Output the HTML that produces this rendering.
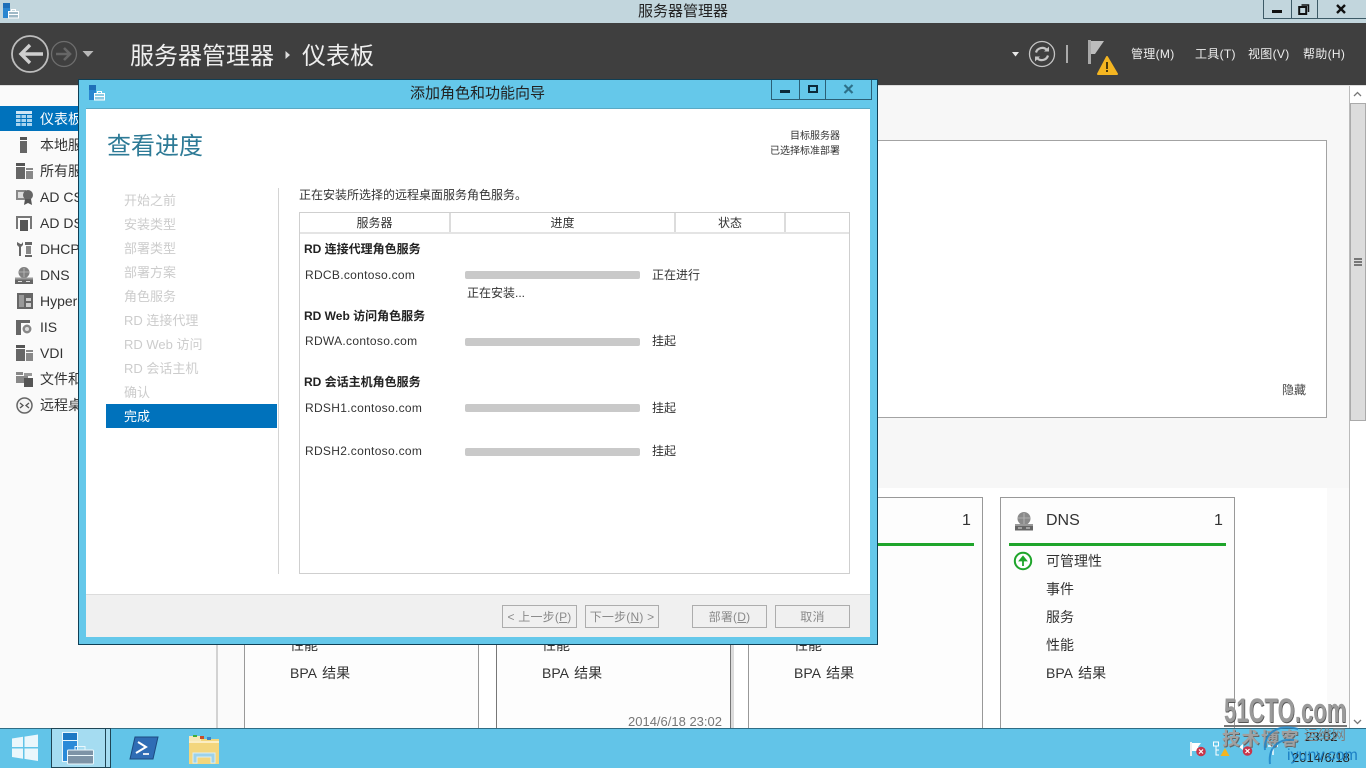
<!DOCTYPE html>
<html lang="zh"><head><meta charset="utf-8"><title>服务器管理器</title>
<style>
html,body{margin:0;padding:0;width:1366px;height:768px;overflow:hidden;background:#fafafa}
body{font-family:"Liberation Sans","Noto Sans CJK SC",sans-serif;color:#333;position:relative}
.a,.t{position:absolute}
.t{white-space:nowrap;line-height:20px}
.n{font-size:14px;color:#333;left:40px}
.s{font-size:13px;color:#ccc;left:124px}
.c{font-size:12px;color:#333}
.u{letter-spacing:.3px}
.b{font-size:12px;color:#222;font-weight:bold;left:304px}
.bar{position:absolute;left:465px;width:175px;height:8px;background:#c9c9c9;border-radius:2px}
.h{position:absolute;top:213px;height:19px;border-right:2px solid #dcdcdc;font-size:12px;text-align:center;line-height:21px;color:#333}
.btn{position:absolute;top:605px;height:21px;border:1px solid #adadad;font-size:12px;color:#8a8a8a;text-align:center;line-height:22px;box-sizing:content-box;background:#f0f0f0;letter-spacing:.2px}
.card{position:absolute;background:#fdfdfd;border:1px solid #999;box-sizing:border-box}
.m{font-size:14px;color:#333;word-spacing:2px}
.menu{font-size:12px;color:#eee;letter-spacing:.3px}
svg{position:absolute;display:block}
</style></head><body>

<!-- title bar -->
<div class="a" style="left:0;top:0;width:1366px;height:23px;background:#c2d6dd"></div>
<svg style="left:2px;top:3px" width="17" height="16" viewBox="0 0 17 16"><rect x="1" y="0" width="7" height="5" fill="#1e6fb8"/><rect x="1" y="5" width="7" height="10" fill="#2a86d0"/><rect x="6.500" y="8.500" width="10" height="6.500" fill="#9fb9c6" stroke="#fff"/><path d="M9.500 8.500V6.500h4v2M7 11.500h9" stroke="#fff" fill="none"/></svg>
<div class="t" style="left:638px;top:2px;font-size:15px;color:#222">服务器管理器</div>
<div class="a" style="left:1263px;top:0;width:104px;height:19px;border:1px solid #3d5a66;border-top:0;box-sizing:border-box"></div>
<div class="a" style="left:1291px;top:0;width:1px;height:19px;background:#3d5a66"></div>
<div class="a" style="left:1317px;top:0;width:1px;height:19px;background:#3d5a66"></div>
<div class="a" style="left:1272px;top:10px;width:10px;height:3px;background:#111"></div>
<svg style="left:1298px;top:4px" width="12" height="11" viewBox="0 0 12 11"><path d="M3.500 1h7v7" stroke="#111" stroke-width="1.500" fill="none"/><rect x="1.200" y="3" width="7" height="7" stroke="#111" stroke-width="2" fill="none"/></svg>
<svg style="left:1335px;top:4px" width="12" height="10" viewBox="0 0 12 10"><path d="M2 1l8 8M10 1l-8 8" stroke="#111" stroke-width="2.400"/></svg>

<!-- dark header -->
<div class="a" style="left:0;top:23px;width:1366px;height:62px;background:#3f3f3f"></div>
<svg style="left:10px;top:34px" width="40" height="40" viewBox="0 0 40 40"><circle cx="20" cy="20" r="18" stroke="#bdbdbd" stroke-width="1.800" fill="none"/><path d="M33 20H11M20 11L11 20l9 9" stroke="#cfcfcf" stroke-width="3.400" fill="none"/></svg>
<svg style="left:50px;top:40px" width="28" height="28" viewBox="0 0 28 28"><circle cx="14" cy="14" r="12.500" stroke="#6d6d6d" stroke-width="1.300" fill="none"/><path d="M6 14h14M14 8l6 6-6 6" stroke="#666" stroke-width="2.600" fill="none"/></svg>
<svg style="left:82px;top:50px" width="12" height="8"><path d="M0.500 1h11L6 7z" fill="#b8b8b8"/></svg>
<div class="t" style="left:130px;top:40px;font-size:24px;line-height:34px;color:#eee">服务器管理器</div>
<svg style="left:285px;top:50px" width="6" height="10"><path d="M0.500 1L5 5 .5 9z" fill="#ddd"/></svg>
<div class="t" style="left:302px;top:40px;font-size:24px;line-height:34px;color:#eee">仪表板</div>
<svg style="left:1012px;top:52px" width="7" height="5"><path d="M0 0h7L3.500 4.500z" fill="#e8e8e8"/></svg>
<svg style="left:1028px;top:40px" width="28" height="28" viewBox="0 0 28 28"><circle cx="14" cy="14" r="12.500" stroke="#c4c4c4" stroke-width="1.300" fill="none"/><path d="M8 12.500a6.500 6.500 0 0 1 11-2.500M20 15.500a6.500 6.500 0 0 1-11 2.500" stroke="#c4c4c4" stroke-width="2.200" fill="none"/><path d="M21 6.500v5h-5zM7 21.500v-5h5z" fill="#c4c4c4"/></svg>
<div class="a" style="left:1066px;top:45px;width:2px;height:18px;background:#aaa"></div>
<svg style="left:1087px;top:39px" width="32" height="37" viewBox="0 0 32 37"><rect x="1" y="1" width="3" height="24" fill="#a8a8a8"/><path d="M4 2h13L8 15H4z" fill="#bdbdbd"/><path d="M20 18L11 35h19z" fill="#f4b521" stroke="#f4b521" stroke-width="2" stroke-linejoin="round"/><rect x="19.100" y="23" width="1.800" height="7" fill="#3a2c08"/><rect x="19.100" y="31" width="1.800" height="2" fill="#3a2c08"/></svg>
<div class="t menu" style="left:1131px;top:44px">管理(M)</div>
<div class="t menu" style="left:1195px;top:44px">工具(T)</div>
<div class="t menu" style="left:1248px;top:44px">视图(V)</div>
<div class="t menu" style="left:1303px;top:44px">帮助(H)</div>

<!-- main content background -->
<div class="a" style="left:0;top:85px;width:1366px;height:1px;background:#ddd"></div>
<div class="a" style="left:218px;top:86px;width:1131px;height:402px;background:#f7f7f7"></div>
<div class="a" style="left:216px;top:86px;width:2px;height:642px;background:#d2d2d2"></div>

<!-- scrollbar -->
<div class="a" style="left:1349px;top:86px;width:17px;height:642px;background:#fff;border-left:1px solid #bbb;box-sizing:border-box"></div>
<svg style="left:1353px;top:91px" width="9" height="6"><path d="M1 5l3.500-3.500L8 5" stroke="#777" stroke-width="1.300" fill="none"/></svg>
<div class="a" style="left:1350px;top:103px;width:16px;height:318px;background:#dcdcdc;border:1px solid #aaa;box-sizing:border-box"></div>
<div class="a" style="left:1354px;top:258px;width:8px;height:2px;background:#777"></div>
<div class="a" style="left:1354px;top:261px;width:8px;height:2px;background:#777"></div>
<div class="a" style="left:1354px;top:264px;width:8px;height:2px;background:#777"></div>
<svg style="left:1353px;top:719px" width="9" height="6"><path d="M1 1l3.500 3.500L8 1" stroke="#777" stroke-width="1.300" fill="none"/></svg>

<!-- welcome panel -->
<div class="a" style="left:700px;top:140px;width:627px;height:278px;background:#fff;border:1px solid #a3a3a3;box-sizing:border-box"></div>
<div class="t" style="left:1282px;top:380px;font-size:12px;color:#444">隐藏</div>

<!-- cards area -->
<div class="a" style="left:244px;top:488px;width:1083px;height:240px;background:#fff"></div>
<div class="card" style="left:244px;top:497px;width:235px;height:240px"></div>
<div class="card" style="left:496px;top:497px;width:235px;height:240px;border-color:#777"></div>
<div class="a" style="left:731px;top:497px;width:3px;height:231px;background:#dcdcdc"></div>
<div class="card" style="left:748px;top:497px;width:235px;height:240px"></div>
<div class="card" style="left:1000px;top:497px;width:235px;height:240px"></div>
<div class="a" style="left:760px;top:543px;width:214px;height:3px;background:#1fa52b"></div>
<div class="t" style="left:962px;top:511px;font-size:16px;color:#333">1</div>
<svg style="left:1015px;top:512px" width="18" height="19" viewBox="0 0 18 19"><circle cx="9" cy="6.500" r="6.500" fill="#8a8a8a"/><path d="M3 6h12M9 1v11" stroke="#bbb" stroke-width=".8"/><rect x="0" y="12" width="18" height="2" fill="#999"/><rect x="0" y="14" width="18" height="4.500" fill="#666"/><path d="M3 16h4M11 16h4" stroke="#ddd"/></svg>
<div class="t" style="left:1046px;top:511px;font-size:16px;color:#333">DNS</div>
<div class="t" style="left:1214px;top:511px;font-size:16px;color:#333">1</div>
<div class="a" style="left:1009px;top:543px;width:217px;height:3px;background:#1fa52b"></div>
<svg style="left:1013px;top:551px" width="20" height="20" viewBox="0 0 20 20"><circle cx="10" cy="10" r="8.200" stroke="#1fa52b" stroke-width="2" fill="#fff"/><path d="M10 15V8M7 9.500L10 5.800 13 9.500z" stroke="#1fa52b" stroke-width="1.800" fill="#1fa52b"/></svg>
<div class="t m" style="left:1046px;top:551px">可管理性</div>
<div class="t m" style="left:1046px;top:579px">事件</div>
<div class="t m" style="left:1046px;top:607px">服务</div>
<div class="t m" style="left:1046px;top:635px">性能</div>
<div class="t m" style="left:1046px;top:663px">BPA 结果</div>
<div class="t m" style="left:290px;top:635px">性能</div>
<div class="t m" style="left:290px;top:663px">BPA 结果</div>
<div class="t m" style="left:542px;top:635px">性能</div>
<div class="t m" style="left:542px;top:663px">BPA 结果</div>
<div class="t m" style="left:794px;top:635px">性能</div>
<div class="t m" style="left:794px;top:663px">BPA 结果</div>
<div class="t" style="left:628px;top:712px;font-size:13px;color:#777">2014/6/18 23:02</div>

<!-- left nav -->
<div class="a" style="left:0;top:106px;width:80px;height:25px;background:#0072bc"></div>
<svg style="left:16px;top:111px" width="16" height="15" viewBox="0 0 16 15"><rect width="16" height="3" fill="#cfe6f5"/><path d="M0 4h4.500v3H0zM5.500 4H10v3H5.500zM11 4h5v3h-5zM0 8h4.500v3H0zM5.500 8H10v3H5.500zM11 8h5v3h-5zM0 12h4.500v3H0zM5.500 12H10v3H5.500zM11 12h5v3h-5z" fill="#a8d4ef"/></svg>
<div class="t n" style="top:109px;color:#fff">仪表板</div>
<svg style="left:20px;top:137px" width="8" height="16"><rect width="7" height="3" fill="#555"/><rect y="4" width="7" height="12" fill="#666"/></svg>
<div class="t n" style="top:135px">本地服</div>
<svg style="left:16px;top:163px" width="17" height="16"><rect width="9" height="3" fill="#555"/><rect y="4" width="9" height="12" fill="#666"/><rect x="10" y="5" width="7" height="2" fill="#888"/><rect x="10" y="8" width="7" height="8" fill="#888"/></svg>
<div class="t n" style="top:161px">所有服</div>
<svg style="left:16px;top:189px" width="17" height="16"><rect y="1" width="10" height="10" fill="#888"/><rect x="2" y="3" width="6" height="6" fill="#ddd"/><circle cx="12" cy="6" r="5" fill="#666"/><path d="M9 10l-1 6 4-2 4 2-1-6z" fill="#555"/></svg>
<div class="t n" style="top:187px">AD CS</div>
<svg style="left:16px;top:215px" width="17" height="16"><rect x="0" y="1" width="2" height="13" fill="#777"/><rect x="14" y="1" width="2" height="13" fill="#777"/><rect x="0" y="1" width="16" height="2" fill="#777"/><rect x="4" y="5" width="8" height="11" fill="#555"/></svg>
<div class="t n" style="top:213px">AD DS</div>
<svg style="left:16px;top:241px" width="17" height="16"><path d="M1 1v3l2 2v9h2V6l2-2V1L5.500 3h-1z" fill="#666"/><rect x="9" y="1" width="7" height="3" fill="#666"/><rect x="10" y="5" width="5" height="8" fill="#888"/><rect x="9" y="14" width="7" height="2" fill="#666"/></svg>
<div class="t n" style="top:239px">DHCP</div>
<svg style="left:15px;top:267px" width="18" height="17" viewBox="0 0 18 17"><circle cx="9" cy="5.500" r="5.500" fill="#808080"/><path d="M4 5h10M9 1v9" stroke="#bbb" stroke-width=".8"/><rect x="0" y="10.500" width="18" height="2" fill="#999"/><rect x="0" y="12.500" width="18" height="4.500" fill="#666"/><path d="M3 14.500h4M11 14.500h4" stroke="#ddd"/></svg>
<div class="t n" style="top:265px">DNS</div>
<svg style="left:17px;top:293px" width="16" height="16"><rect width="16" height="16" fill="#666"/><rect x="2" y="2" width="5" height="12" fill="#999"/><rect x="9" y="5" width="5" height="3" fill="#ccc"/><rect x="9" y="10" width="5" height="4" fill="#ccc"/></svg>
<div class="t n" style="top:291px">Hyper</div>
<svg style="left:16px;top:319px" width="17" height="16"><rect y="1" width="5" height="15" fill="#666"/><rect x="0" y="1" width="14" height="3" fill="#666"/><circle cx="11" cy="10" r="5" fill="#888" stroke="#fff"/><circle cx="11" cy="10" r="2" fill="#ddd"/></svg>
<div class="t n" style="top:317px">IIS</div>
<svg style="left:16px;top:345px" width="17" height="16"><rect width="9" height="3" fill="#555"/><rect y="4" width="9" height="12" fill="#666"/><rect x="10" y="5" width="7" height="2" fill="#888"/><rect x="10" y="8" width="7" height="8" fill="#888"/></svg>
<div class="t n" style="top:343px">VDI</div>
<svg style="left:16px;top:371px" width="17" height="16"><rect y="1" width="7" height="3" fill="#888"/><rect x="8" y="2" width="8" height="3" fill="#999"/><rect y="5" width="12" height="7" fill="#888"/><rect x="8" y="7" width="9" height="9" fill="#555"/></svg>
<div class="t n" style="top:369px">文件和</div>
<svg style="left:16px;top:397px" width="17" height="17" viewBox="0 0 17 17"><circle cx="8.500" cy="8.500" r="7.500" stroke="#666" stroke-width="1.500" fill="#f4f4f4"/><path d="M4 6l3 2.500L4 11M13 6l-3 2.500 3 2.500" stroke="#555" stroke-width="1.300" fill="none"/></svg>
<div class="t n" style="top:395px">远程桌</div>

<!-- dialog -->
<div class="a" style="left:78px;top:79px;width:800px;height:566px;background:#65c8ea;border:1px solid #0f3f55;box-sizing:border-box"></div>
<svg style="left:88px;top:85px" width="17" height="16" viewBox="0 0 17 16"><rect x="1" y="0" width="7" height="5" fill="#1e6fb8"/><rect x="1" y="5" width="7" height="10" fill="#2a86d0"/><rect x="6.500" y="8.500" width="10" height="6.500" fill="#8fcbe3" stroke="#fff"/><path d="M9.500 8.500V6.500h4v2M7 11.500h9" stroke="#fff" fill="none"/></svg>
<div class="t" style="left:410px;top:84px;font-size:15px;color:#222">添加角色和功能向导</div>
<div class="a" style="left:771px;top:80px;width:101px;height:20px;border:1px solid #2b5f76;border-top:0;box-sizing:border-box"></div>
<div class="a" style="left:799px;top:80px;width:1px;height:20px;background:#2b5f76"></div>
<div class="a" style="left:825px;top:80px;width:1px;height:20px;background:#2b5f76"></div>
<div class="a" style="left:780px;top:90px;width:10px;height:3px;background:#0c2a3a"></div>
<div class="a" style="left:808px;top:85px;width:10px;height:8px;border:2px solid #0c2a3a;box-sizing:border-box"></div>
<svg style="left:843px;top:84px" width="11" height="10" viewBox="0 0 11 10"><path d="M1.500 1l8 8M9.500 1l-8 8" stroke="#2d7089" stroke-width="2.200"/></svg>
<div class="a" style="left:86px;top:109px;width:784px;height:528px;background:#fff;box-shadow:0 -1px 0 #5aa9c4"></div>

<div class="t" style="left:107px;top:130px;font-size:24px;line-height:34px;color:#2d7a96">查看进度</div>
<div class="t c" style="right:526px;top:130px;font-size:10px;line-height:14px;color:#333">目标服务器</div>
<div class="t c" style="right:526px;top:145px;font-size:10px;line-height:14px;color:#333">已选择标准部署</div>

<div class="t s" style="top:191px">开始之前</div>
<div class="t s" style="top:215px">安装类型</div>
<div class="t s" style="top:239px">部署类型</div>
<div class="t s" style="top:263px">部署方案</div>
<div class="t s" style="top:287px">角色服务</div>
<div class="t s" style="top:311px">RD 连接代理</div>
<div class="t s" style="top:335px">RD Web 访问</div>
<div class="t s" style="top:359px">RD 会话主机</div>
<div class="t s" style="top:383px">确认</div>
<div class="a" style="left:106px;top:404px;width:171px;height:24px;background:#0072bc"></div>
<div class="t s" style="top:407px;color:#fff">完成</div>
<div class="a" style="left:278px;top:188px;width:1px;height:386px;background:#d4d4d4"></div>

<div class="t c" style="left:299px;top:185px">正在安装所选择的远程桌面服务角色服务。</div>
<div class="a" style="left:299px;top:212px;width:551px;height:362px;border:1px solid #cfcfcf;box-sizing:border-box"></div>
<div class="a" style="left:300px;top:232px;width:549px;height:2px;background:#e4e4e4"></div>
<div class="h" style="left:300px;width:149px">服务器</div>
<div class="h" style="left:451px;width:223px">进度</div>
<div class="h" style="left:676px;width:108px">状态</div>

<div class="t b" style="top:239px">RD 连接代理角色服务</div>
<div class="t c u" style="left:305px;top:265px">RDCB.contoso.com</div>
<div class="bar" style="top:271px"></div>
<div class="t c" style="left:652px;top:265px">正在进行</div>
<div class="t c" style="left:467px;top:283px">正在安装...</div>
<div class="t b" style="top:306px">RD Web 访问角色服务</div>
<div class="t c u" style="left:305px;top:331px">RDWA.contoso.com</div>
<div class="bar" style="top:338px"></div>
<div class="t c" style="left:652px;top:331px">挂起</div>
<div class="t b" style="top:372px">RD 会话主机角色服务</div>
<div class="t c u" style="left:305px;top:398px">RDSH1.contoso.com</div>
<div class="bar" style="top:404px"></div>
<div class="t c" style="left:652px;top:398px">挂起</div>
<div class="t c u" style="left:305px;top:441px">RDSH2.contoso.com</div>
<div class="bar" style="top:448px"></div>
<div class="t c" style="left:652px;top:441px">挂起</div>

<div class="a" style="left:86px;top:594px;width:784px;height:43px;background:#f0f0f0;border-top:1px solid #dcdcdc;box-sizing:border-box"></div>
<div class="btn" style="left:502px;width:73px">&lt; 上一步(<u>P</u>)</div>
<div class="btn" style="left:585px;width:72px">下一步(<u>N</u>) &gt;</div>
<div class="btn" style="left:692px;width:73px">部署(<u>D</u>)</div>
<div class="btn" style="left:775px;width:73px">取消</div>

<!-- taskbar -->
<div class="a" style="left:0;top:728px;width:1366px;height:40px;background:#62c4e8;border-top:1px solid #2f6d85;box-sizing:border-box"></div>
<div class="a" style="left:51px;top:728px;width:60px;height:40px;background:#a5dcf1;border:1px solid #1f4555;box-sizing:border-box"></div>
<div class="a" style="left:105px;top:729px;width:1px;height:38px;background:#1f4555"></div>
<svg style="left:11px;top:734px" width="28" height="27" viewBox="0 0 28 27"><path d="M1 4.500l11-1.700v10.200H1zM13.500 2.600L27 .5v12.500H13.500zM1 14.500h11v10.200L1 23zM13.500 14.500H27V27l-13.500-2.100z" fill="#eaf7fc"/></svg>
<svg style="left:62px;top:732px" width="33" height="33" viewBox="0 0 33 33"><rect x="0.500" y="0.500" width="15" height="8" fill="#1e79c4" stroke="#eaf7fc"/><rect x="0.500" y="8.500" width="15" height="21" fill="#2a8ad8" stroke="#eaf7fc"/><rect x="5.500" y="18" width="26" height="14" rx="1" fill="#7d93a6" stroke="#eaf7fc"/><path d="M13 18v-3.500h10V18M6 23.500h25" stroke="#eaf7fc" fill="none"/></svg>
<svg style="left:129px;top:736px" width="30" height="24" viewBox="0 0 30 24"><path d="M6 1h23L24 23H1z" fill="#2f6db5" stroke="#1c4a80"/><path d="M9 6l8 5-10 6" stroke="#fff" stroke-width="2" fill="none"/><path d="M14 18h6" stroke="#dfe8f2" stroke-width="2"/></svg>
<svg style="left:188px;top:734px" width="34" height="30" viewBox="0 0 34 30"><path d="M1 5h30v25H1z" fill="#f3d67d"/><rect x="1" y="2" width="12" height="6" fill="#f7e9b8"/><rect x="5" y="1" width="4" height="2" fill="#3fae3a"/><rect x="12" y="2" width="4" height="3" fill="#c64d2a"/><rect x="19" y="3" width="4" height="3" fill="#3c86c6"/><rect x="1" y="7" width="30" height="2" fill="#fbeec4"/><path d="M5 29V19h22v10h-4v-6H9v6z" fill="#9dd2ea" stroke="#d8eef7"/></svg>

<!-- tray -->
<svg style="left:1189px;top:740px" width="18" height="17" viewBox="0 0 18 17"><rect x="1" y="2" width="2" height="14" fill="#eee"/><path d="M3 3h9l-3 4 3 4H3z" fill="#fff"/><circle cx="12" cy="11.500" r="4.800" fill="#c8354a"/><path d="M10 9.500l4 4M14 9.500l-4 4" stroke="#fff" stroke-width="1.200"/></svg>
<svg style="left:1213px;top:741px" width="17" height="16" viewBox="0 0 17 16"><rect x="0.500" y="1" width="5" height="4" fill="none" stroke="#fff"/><path d="M3 5v9h3M3 9h3" stroke="#fff" fill="none"/><path d="M12 7l-4.500 8h9z" fill="#f4b521"/></svg>
<svg style="left:1238px;top:740px" width="16" height="16" viewBox="0 0 16 16"><path d="M1 7l4 3V4z" fill="#fff"/><circle cx="9.500" cy="11" r="4.800" fill="#c8354a"/><path d="M7.500 9l4 4M11.500 9l-4 4" stroke="#fff" stroke-width="1.200"/></svg>
<svg style="left:1267px;top:744px" width="12" height="12"><path d="M1 2h10M6 2v9" stroke="#fff" stroke-width="1.400"/></svg>
<div class="t" style="left:1305px;top:727px;font-size:13px;color:#222">23:02</div>
<div class="t" style="left:1292px;top:748px;font-size:13px;color:#222">2014/6/18</div>

<!-- watermark -->
<div class="t" style="left:1224px;top:694px;font-size:34px;line-height:34px;font-weight:bold;color:#9a9a9a;text-shadow:1px 1px 0 #555;transform:scaleX(.65);transform-origin:left">51CTO.com</div>
<div class="a" style="left:1224px;top:725px;width:123px;height:2px;background:#777"></div>
<div class="t" style="left:1222px;top:729px;font-size:18px;font-weight:bold;color:#a0a0a0;letter-spacing:1.500px;text-shadow:1px 1px 0 #666">技术博客</div>
<div class="t" style="left:1304px;top:725px;font-size:14px;color:#808080">运维网</div>
<div class="t" style="left:1287px;top:746px;font-size:16px;color:#1c7fc4">iyunv.com</div>
<svg style="left:1262px;top:720px" width="44" height="48" viewBox="0 0 44 48"><path d="M3 30C1 14 16 3 36 9M8 44C6 28 16 18 32 20" stroke="#2186c8" stroke-width="2" fill="none" opacity=".85"/></svg>

</body></html>
